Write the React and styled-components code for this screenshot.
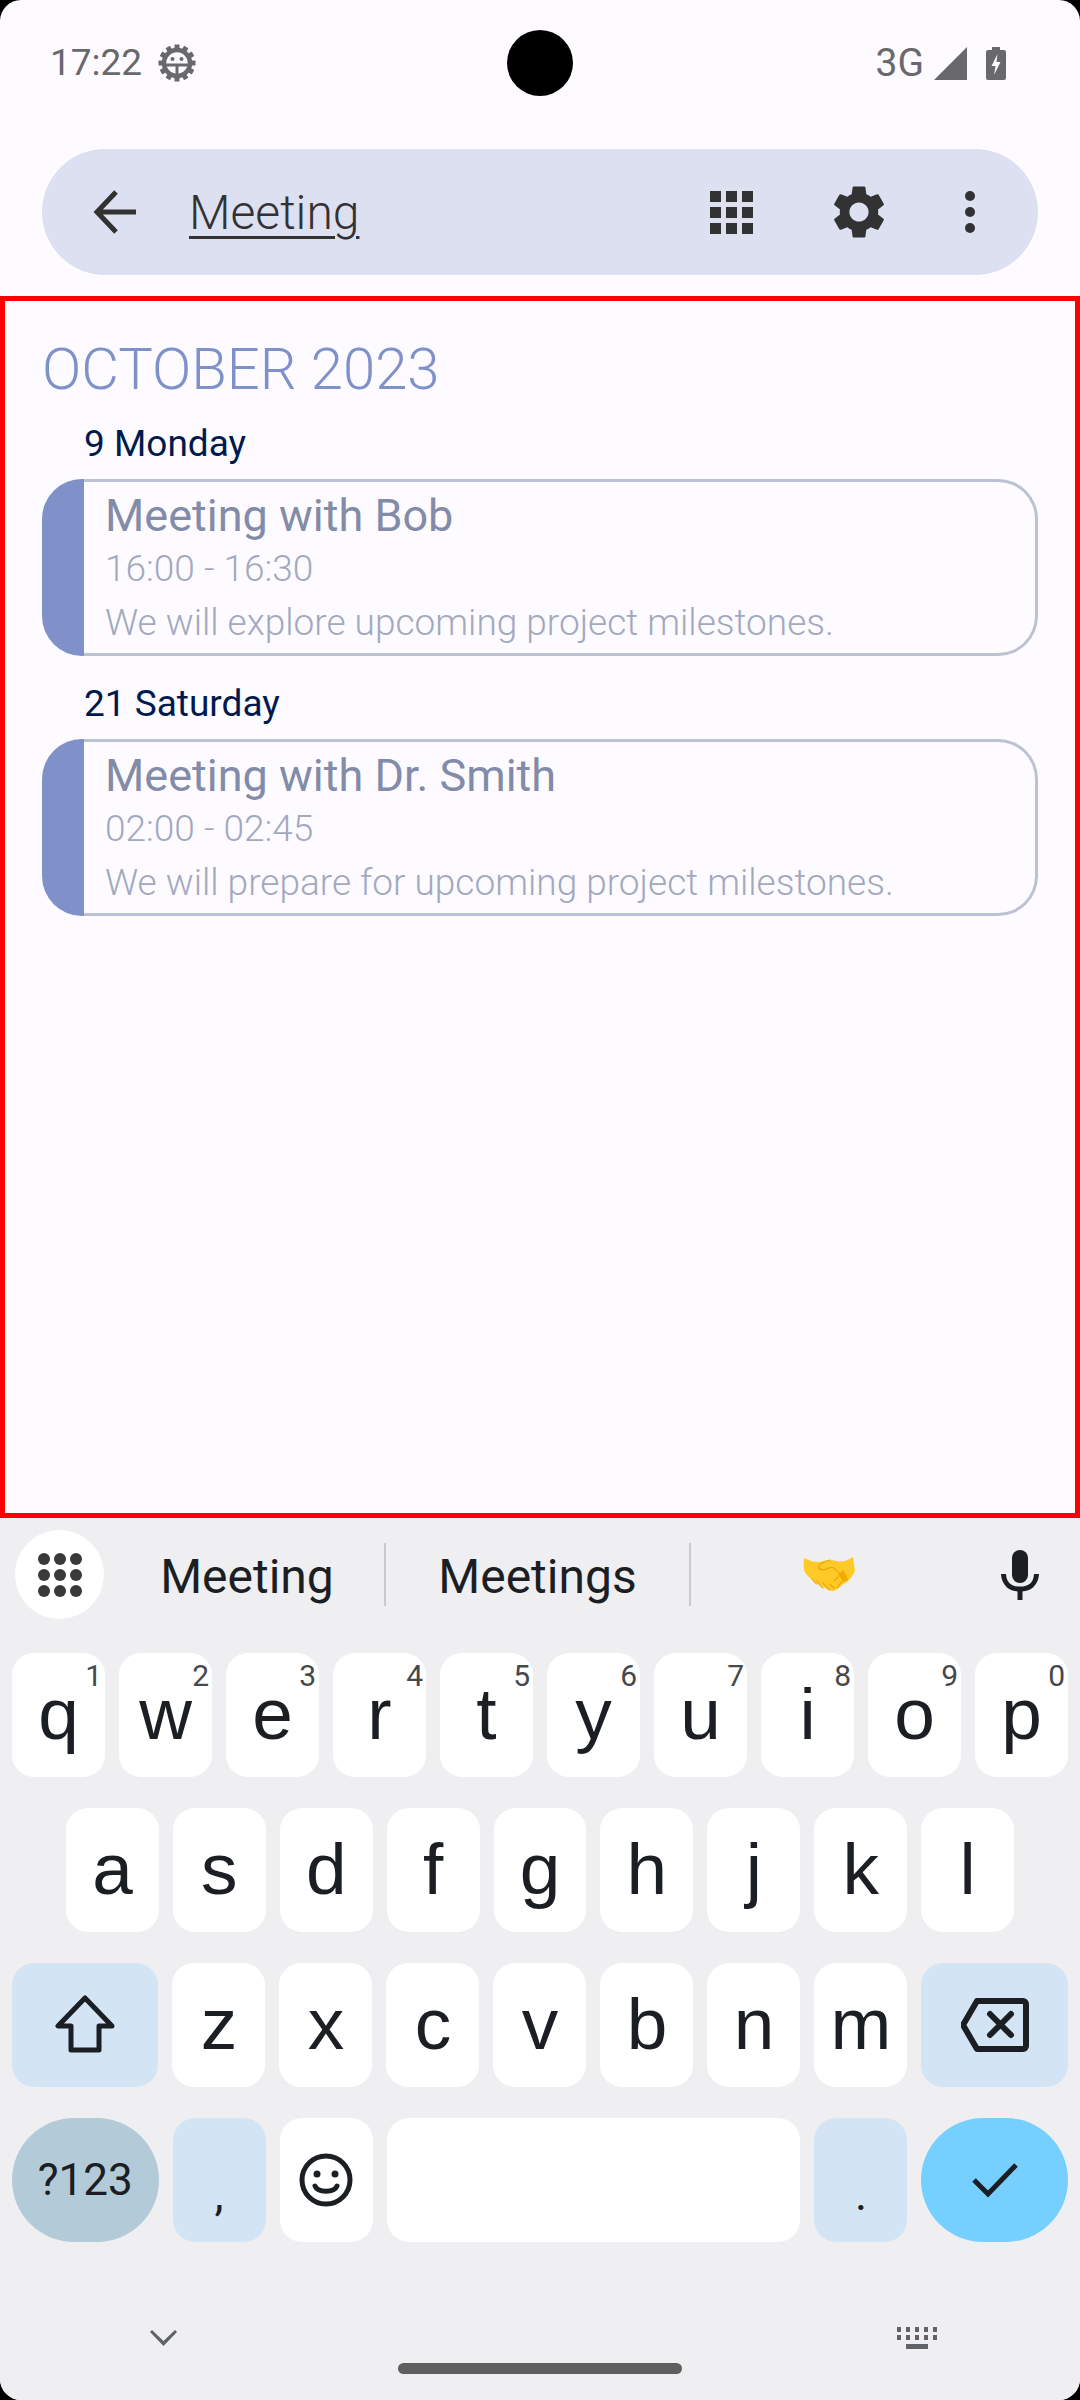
import React from "react";
import styled, { createGlobalStyle } from "styled-components";

const GlobalStyle = createGlobalStyle`
  html, body {
    margin: 0;
    padding: 0;
    background: #000;
  }
  * {
    box-sizing: border-box;
  }
`;

const Screen = styled.div`
  position: relative;
  width: 1080px;
  height: 2400px;
  display: flex;
  flex-direction: column;
  overflow: hidden;
  border-radius: 21px;
  background: #fdfbff;
  font-family: Roboto, "Liberation Sans", sans-serif;
`;

const Camera = styled.div`
  position: absolute;
  top: 30px;
  left: 507px;
  width: 66px;
  height: 66px;
  border-radius: 50%;
  background: #000;
`;

const StatusBar = styled.div`
  height: 127px;
  padding: 28px 74px 0 50px;
  display: flex;
  justify-content: space-between;
  align-items: flex-start;
  color: #69686d;
`;

const StatusGroup = styled.div`
  height: 70px;
  display: flex;
  align-items: center;
`;

const StatusText = styled.span`
  font-size: ${({ $size }) => $size}px;
  line-height: 70px;
`;

const StatusGear = styled.svg`
  margin-left: 16px;
`;

const SignalSvg = styled.svg`
  margin-left: 10px;
  fill: #69686d;
`;

const BatterySvg = styled.svg`
  margin-left: 19px;
`;

const SearchBar = styled.div`
  height: 126px;
  margin: 22px 42px 21px;
  padding: 0 63px 0 42px;
  display: flex;
  align-items: center;
  background: #dce0f0;
  border-radius: 63px;
  color: #323232;
`;

const SearchText = styled.div`
  margin-left: 41px;
  flex: 1;
  font-size: 48px;
  font-weight: 300;
  text-decoration: underline;
  text-decoration-thickness: 3px;
  text-underline-offset: 7px;
`;

const BarIcon = styled.svg`
  display: block;
  fill: currentColor;
  margin-left: ${({ $ml }) => $ml || 0}px;
`;

const BackArrow = styled.svg`
  display: block;
  fill: none;
  stroke: currentColor;
  stroke-width: 5;
`;

const Agenda = styled.main`
  flex: 1;
  min-height: 0;
  border: 5px solid #ff0000;
  padding: 32px 37px 0;
`;

const MonthTitle = styled.div`
  font-size: 58px;
  line-height: 72px;
  font-weight: 300;
  color: #7f91c9;
`;

const DayLabel = styled.div`
  margin: 11px 0 0 42px;
  height: 56px;
  font-size: 37px;
  line-height: 56px;
  color: #001a4f;
`;

const Card = styled.div`
  height: 177px;
  margin-top: 7px;
  margin-bottom: 20px;
  display: flex;
`;

const CardStrip = styled.div`
  width: 42px;
  flex: none;
  border-radius: 40px 0 0 40px;
  background: #7f91c8;
`;

const CardBody = styled.div`
  flex: 1;
  padding: 3px 0 0 21px;
  border: 3px solid #bcc1d4;
  border-left: none;
  border-radius: 0 40px 40px 0;
`;

const CardTitle = styled.div`
  font-size: 45px;
  line-height: 62px;
  color: #828ba8;
`;

const CardTime = styled.div`
  font-size: 37px;
  line-height: 44px;
  font-weight: 300;
  color: #a2a9bf;
`;

const CardNote = styled.div`
  margin-top: 10px;
  font-size: 37px;
  line-height: 44px;
  font-weight: 300;
  color: #a2a9bf;
`;

const Keyboard = styled.div`
  height: 882px;
  flex: none;
  display: flex;
  flex-direction: column;
  background: #efeff2;
  color: #1b1f23;
`;

const Suggestions = styled.div`
  height: 135px;
  flex: none;
  padding: 12px 0 0 15px;
  display: flex;
  align-items: flex-start;
`;

const AppsButton = styled.div`
  width: 89px;
  height: 89px;
  flex: none;
  display: flex;
  align-items: center;
  justify-content: center;
  border-radius: 50%;
  background: #fff;
`;

const Suggestion = styled.div`
  width: ${({ width }) => width}px;
  height: 63px;
  margin-top: 13px;
  padding-left: ${({ $shift }) => $shift || 0}px;
  padding-top: ${({ $text }) => ($text ? 3 : 0)}px;
  flex: none;
  display: flex;
  align-items: center;
  justify-content: center;
  font-size: 48px;
  border-right: ${({ $divider }) => ($divider ? "2px solid #c9cacd" : "none")};
`;

const KeyRows = styled.div`
  display: flex;
  flex-direction: column;
  gap: 31px;
  padding: 0 12px;
`;

const KeyRow = styled.div`
  height: 124px;
  display: flex;
  gap: 14px;
  padding: 0 ${({ $inset }) => $inset || 0}px;
`;

const Key = styled.div`
  position: relative;
  flex: ${({ $grow }) => $grow || 1} 1 0;
  display: flex;
  align-items: ${({ $low }) => ($low ? "flex-end" : "center")};
  justify-content: center;
  padding-bottom: ${({ $low, $letter }) => ($low ? "25px" : $letter ? "3px" : "0")};
  border-radius: ${({ $round }) => ($round ? "62px" : "22px")};
  background: ${({ $bg }) => $bg || "#fff"};
  font-family: ${({ $letter }) => ($letter ? '"Liberation Sans", Roboto, sans-serif' : "inherit")};
  font-size: ${({ $size }) => $size || 73}px;
  line-height: 1;
`;

const Hint = styled.span`
  position: absolute;
  top: 8px;
  right: 3px;
  font-family: Roboto, sans-serif;
  font-size: 30px;
  line-height: 1;
  color: #45484c;
`;

const NavRow = styled.div`
  position: relative;
  flex: 1;
`;

const NavIcon = styled.svg`
  position: absolute;
  top: ${({ $top }) => $top}px;
  left: ${({ $left }) => $left}px;
  fill: #5f6368;
`;

const HomePill = styled.div`
  position: absolute;
  left: 398px;
  top: 121px;
  width: 284px;
  height: 11px;
  border-radius: 6px;
  background: #5f5f5f;
`;

const GEAR =
  "M19.14 12.94c.04-.3.06-.61.06-.94 0-.32-.02-.64-.07-.94l2.03-1.58c.18-.14.23-.41.12-.61l-1.92-3.32c-.12-.22-.37-.29-.59-.22l-2.39.96c-.5-.38-1.03-.7-1.62-.94l-.36-2.54c-.04-.24-.24-.41-.48-.41h-3.84c-.24 0-.43.17-.47.41l-.36 2.54c-.59.24-1.13.57-1.62.94l-2.39-.96c-.22-.08-.47 0-.59.22L2.74 8.87c-.12.21-.08.47.12.61l2.03 1.58c-.05.3-.09.63-.09.94s.02.64.07.94l-2.03 1.58c-.18.14-.23.41-.12.61l1.92 3.32c.12.22.37.29.59.22l2.39-.96c.5.38 1.03.7 1.62.94l.36 2.54c.05.24.24.41.48.41h3.84c.24 0 .44-.17.47-.41l.36-2.54c.59-.24 1.13-.56 1.62-.94l2.39.96c.22.08.47 0 .59-.22l1.92-3.32c.12-.22.07-.47-.12-.61l-2.01-1.58zM12 15.6c-1.98 0-3.6-1.62-3.6-3.6s1.62-3.6 3.6-3.6 3.6 1.62 3.6 3.6-1.62 3.6-3.6 3.6z";

const DebugGearIcon = () => (
  <StatusGear width="38" height="38" viewBox="0 0 38 38">
    <g fill="#69686d">
      {Array.from({ length: 12 }).map((_, i) => (
        <rect key={i} x="16.5" y="0.5" width="5" height="6" transform={`rotate(${i * 30} 19 19)`} />
      ))}
    </g>
    <circle cx="19" cy="19" r="13" fill="none" stroke="#69686d" strokeWidth="4.5" />
    <path d="M8 21h22M19 21v10" stroke="#69686d" strokeWidth="3" fill="none" />
    <circle cx="14.5" cy="15" r="2" fill="#69686d" />
    <circle cx="23.5" cy="15" r="2" fill="#69686d" />
  </StatusGear>
);

const SignalIcon = () => (
  <SignalSvg width="33" height="33" viewBox="0 0 33 33">
    <path d="M33 0v33H0z" />
  </SignalSvg>
);

const BatteryIcon = () => (
  <BatterySvg width="20" height="33" viewBox="0 0 20 33">
    <path d="M6 0h8v3h4a2 2 0 0 1 2 2v26a2 2 0 0 1-2 2H2a2 2 0 0 1-2-2V5a2 2 0 0 1 2-2h4z" fill="#69686d" />
    <path d="M11.5 7 5.5 19h4l-1.5 9 6.5-13h-4z" fill="#fdfbff" />
  </BatterySvg>
);

const BackIcon = () => (
  <BackArrow width="64" height="64" viewBox="0 0 64 64">
    <path d="M52 32H14M32 12 13 32l19 20" />
  </BackArrow>
);

const GridIcon = () => (
  <BarIcon width="43" height="43" viewBox="0 0 43 43">
    {[0, 16, 32].map((y) =>
      [0, 16, 32].map((x) => <rect key={`${x}-${y}`} x={x} y={y} width="11" height="11" />)
    )}
  </BarIcon>
);

const GearIcon = () => (
  <BarIcon $ml={74} width="64" height="64" viewBox="0 0 24 24">
    <path d={GEAR} />
  </BarIcon>
);

const DotsIcon = () => (
  <BarIcon $ml={74} width="10" height="42" viewBox="0 0 10 42">
    <circle cx="5" cy="5" r="5" />
    <circle cx="5" cy="21" r="5" />
    <circle cx="5" cy="37" r="5" />
  </BarIcon>
);

const AppsIcon = () => (
  <svg width="44" height="44" viewBox="0 0 44 44" fill="#3a3a3c">
    {[6, 22, 38].map((y) =>
      [6, 22, 38].map((x) => <circle key={`${x}-${y}`} cx={x} cy={y} r="6" />)
    )}
  </svg>
);

const HandshakeEmoji = () => (
  <svg width="52" height="36" viewBox="0 0 52 36">
    <path
      d="M1.5 1C6 3.5 10.5 5 15 5c4 0 8-2.500 12-2 4 .3 7 1.500 10 1.500 5 0 9-2 13-4.500l2 14c-2 4-4 7-7 10l-6 4c-2 2-3 3-5 4-2 2-5 3-7 1-2 0-4-1-6-3-3-.5-5-2-6.500-4C6 21 3.500 18 1.500 14.500.5 10 0 5 1.500 1z"
      fill="#ffca28"
    />
    <path d="M40 13c2 3 4 6 5 10l-4 2-6-7z" fill="#f5ab00" />
    <path
      d="M27 3c-4 1-11 4-11.500 7-.3 3 5 3.500 8 2 2-1 4-2 6-1.500 4 1.500 8 7 11.500 11.500M14 27c-2-1-3-3-5-5M20 31c-2-1-4-4-6-7M27 33c-2-1-5-5-7-7M31 31l-4-4M40 23l-6 8M35 20l-4 4"
      stroke="#eda600"
      strokeWidth="1.2"
      fill="none"
      strokeLinecap="round"
    />
  </svg>
);

const MicIcon = () => (
  <svg width="38" height="50" viewBox="0 0 38 50" fill="#1b1f23">
    <rect x="11" y="0" width="16" height="33" rx="8" />
    <path d="M2.500 24c.5 10 7 15 16.500 15s16-5 16.500-15" fill="none" stroke="#1b1f23" strokeWidth="5" />
    <rect x="16.500" y="38" width="5" height="12" />
  </svg>
);

const ShiftIcon = () => (
  <svg width="60" height="60" viewBox="0 0 60 60" fill="none" stroke="#1b1f23" strokeWidth="5" strokeLinejoin="round">
    <path d="M30 3 3 31h13v24h28V31h13z" />
  </svg>
);

const BackspaceIcon = () => (
  <svg width="68" height="54" viewBox="0 0 68 54" fill="none" stroke="#1b1f23" strokeWidth="6" strokeLinejoin="round">
    <path d="M16 3h46a3 3 0 0 1 3 3v42a3 3 0 0 1-3 3H16L2 27z" />
    <path d="M29 16l21 21M50 16 29 37" strokeLinecap="round" />
  </svg>
);

const SmileIcon = () => (
  <svg width="54" height="54" viewBox="0 0 54 54" fill="none" stroke="#1b1f23" strokeWidth="5">
    <circle cx="27" cy="27" r="24" />
    <circle cx="18" cy="21" r="3.5" fill="#1b1f23" stroke="none" />
    <circle cx="36" cy="21" r="3.5" fill="#1b1f23" stroke="none" />
    <path d="M16 33c3 7 19 7 22 0" strokeLinecap="round" />
  </svg>
);

const CheckIcon = () => (
  <svg width="46" height="36" viewBox="0 0 46 36" fill="none" stroke="#1b1f23" strokeWidth="5">
    <path d="M2 18l14 14L44 3" />
  </svg>
);

const events = [
  {
    day: "9 Monday",
    title: "Meeting with Bob",
    time: "16:00 - 16:30",
    note: "We will explore upcoming project milestones.",
  },
  {
    day: "21 Saturday",
    title: "Meeting with Dr. Smith",
    time: "02:00 - 02:45",
    note: "We will prepare for upcoming project milestones.",
  },
];

const topRow = ["q", "w", "e", "r", "t", "y", "u", "i", "o", "p"];
const hints = ["1", "2", "3", "4", "5", "6", "7", "8", "9", "0"];
const homeRow = ["a", "s", "d", "f", "g", "h", "j", "k", "l"];
const lowRow = ["z", "x", "c", "v", "b", "n", "m"];
const ACCENT = "#d3e5f5";

export default function App() {
  return (
    <>
      <GlobalStyle />
      <Screen>
        <Camera />
        <StatusBar>
          <StatusGroup>
            <StatusText $size={37}>17:22</StatusText>
            <DebugGearIcon />
          </StatusGroup>
          <StatusGroup>
            <StatusText $size={39}>3G</StatusText>
            <SignalIcon />
            <BatteryIcon />
          </StatusGroup>
        </StatusBar>

        <SearchBar>
          <BackIcon />
          <SearchText>Meeting</SearchText>
          <GridIcon />
          <GearIcon />
          <DotsIcon />
        </SearchBar>

        <Agenda>
          <MonthTitle>OCTOBER 2023</MonthTitle>
          {events.map((item) => (
            <div key={item.day}>
              <DayLabel>{item.day}</DayLabel>
              <Card>
                <CardStrip />
                <CardBody>
                  <CardTitle>{item.title}</CardTitle>
                  <CardTime>{item.time}</CardTime>
                  <CardNote>{item.note}</CardNote>
                </CardBody>
              </Card>
            </div>
          ))}
        </Agenda>

        <Keyboard>
          <Suggestions>
            <AppsButton>
              <AppsIcon />
            </AppsButton>
            <Suggestion width={282} $shift={6} $text $divider>Meeting</Suggestion>
            <Suggestion width={305} $text $divider>Meetings</Suggestion>
            <Suggestion width={276}>
              <HandshakeEmoji />
            </Suggestion>
            <Suggestion width={105}>
              <MicIcon />
            </Suggestion>
          </Suggestions>
          <KeyRows>
            <KeyRow>
              {topRow.map((k, i) => (
                <Key key={k} $letter>
                  {k}
                  <Hint>{hints[i]}</Hint>
                </Key>
              ))}
            </KeyRow>
            <KeyRow $inset={54}>
              {homeRow.map((k) => (
                <Key key={k} $letter>{k}</Key>
              ))}
            </KeyRow>
            <KeyRow>
              <Key $grow={1.575} $bg={ACCENT}>
                <ShiftIcon />
              </Key>
              {lowRow.map((k) => (
                <Key key={k} $letter>{k}</Key>
              ))}
              <Key $grow={1.575} $bg={ACCENT}>
                <BackspaceIcon />
              </Key>
            </KeyRow>
            <KeyRow>
              <Key $grow={1.575} $round $bg="#b3cad8" $size={44}>?123</Key>
              <Key $bg={ACCENT} $low $size={46}>,</Key>
              <Key>
                <SmileIcon />
              </Key>
              <Key $grow={4.45} />
              <Key $bg={ACCENT} $low $size={46}>.</Key>
              <Key $grow={1.575} $round $bg="#75d0ff">
                <CheckIcon />
              </Key>
            </KeyRow>
          </KeyRows>
          <NavRow>
            <NavIcon $left={150} $top={88} width="27" height="16" viewBox="0 0 27 16">
              <path d="M13.500 16 0 2l2-2 11.500 11L25 0l2 2z" />
            </NavIcon>
            <NavIcon $left={897} $top={85} width="41" height="22" viewBox="0 0 41 22">
              {[0, 9, 18, 27, 36].map((x) => (
                <g key={x}>
                  <rect x={x} y="0" width="4" height="5" />
                  <rect x={x} y="8" width="4" height="5" />
                </g>
              ))}
              <rect x="9" y="17" width="22" height="5" />
            </NavIcon>
            <HomePill />
          </NavRow>
        </Keyboard>
      </Screen>
    </>
  );
}
